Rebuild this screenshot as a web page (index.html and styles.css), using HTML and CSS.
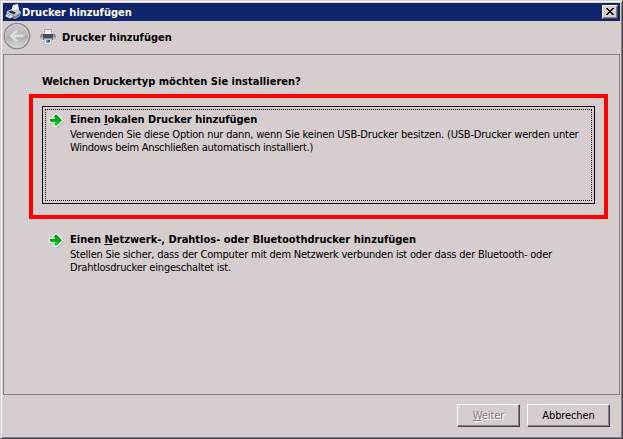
FILE: index.html
```
<!DOCTYPE html>
<html lang="de">
<head>
<meta charset="utf-8">
<title>Drucker hinzufügen</title>
<link rel="stylesheet" href="styles.css">
</head>
<body>
<svg width="0" height="0" class="defs" aria-hidden="true">
  <defs>
    <linearGradient id="green" x1="0" y1="0" x2="0" y2="1"><stop offset="0" stop-color="#078d16"/><stop offset=".5" stop-color="#08a51c"/><stop offset="1" stop-color="#35e34c"/></linearGradient>
    <linearGradient id="orb" x1="0" y1="0" x2="0" y2="1"><stop offset="0" stop-color="#cbcacd"/><stop offset=".48" stop-color="#b9b7ba"/><stop offset=".52" stop-color="#adabae"/><stop offset="1" stop-color="#dcdadc"/></linearGradient>
    <linearGradient id="body" x1="0" y1="0" x2="0" y2="1"><stop offset="0" stop-color="#73777e"/><stop offset=".5" stop-color="#a5a9b0"/><stop offset="1" stop-color="#e2e4e8"/></linearGradient>
    <symbol id="arrow" viewBox="0 0 16 16">
      <path d="M2 6h6L5.500 3.500 8 1.500h1.500L15.500 8l-6 6.500H8L5.500 12 7.500 10H2z" fill="#8d878b" opacity=".5" transform="translate(.5 .7)"/>
      <path d="M1.500 5.300h5L4.900 3.500 7.200 1.200h1.700l6 6.200-6 6.200H7.200L4.900 11.300l1.600-1.800h-5z" fill="url(#green)" stroke="#fff" stroke-width="1.100"/>
    </symbol>
  </defs>
</svg>
<main class="window">
  <header class="titlebar">
    <svg class="app-icon" viewBox="0 0 16 16">
      <path d="M8 1l5-1 1 6-4 2.500-4-1.500z" fill="#f3f5ff"/>
      <path d="M2 7l5-2 2 1 4-1 3 3-1 4-5 3-9-4z" fill="#c3c6cc"/>
      <path d="M1 9l9 3 5-3v2.500l-5 3-9-3z" fill="#7b8088"/>
      <path d="M3 8l3-1.500 5 2L9 10.500z" fill="#30363f"/>
      <path d="M0 12l3-2 5 2-3 2.500z" fill="#e5f0fb"/><path d="M2 12l2-1 2 .7-2 1z" fill="#58a9df"/>
    </svg>
    <span class="title bold">Drucker hinzufügen</span>
    <button class="close" aria-label="Schließen"><svg viewBox="0 0 8 7" shape-rendering="crispEdges"><path d="M0 0h2v1h1v1h2V1h1V0h2v1H7v1H6v1H5v1h1v1h1v1h1v1H6V6H5V5H3v1H2v1H0V6h1V5h1V4h1V3H2V2H1V1H0z"/></svg></button>
  </header>
  <div class="nav">
    <svg class="back" viewBox="0 0 28 28">
      <circle cx="14" cy="14" r="12.700" fill="url(#orb)" stroke="#88868a" stroke-width="1.300"/>
      <circle cx="14" cy="14" r="11.500" fill="none" stroke="#d6d4d7" stroke-width=".7"/>
      <path d="M20.500 14H9.500M14 8.500L8.500 14l5.500 5.500" fill="none" stroke="#dedcdf" stroke-width="2.600"/>
    </svg>
    <svg class="printer" viewBox="0 0 16 16">
      <path d="M4.500.5h7v6h-7z" fill="#e9f0f8" stroke="#a9a9b6"/>
      <path d="M1 5h2v2h10V5h2l1 2v4l-1 1H1l-1-1V7z" fill="url(#body)"/>
      <path d="M3 5h10v4H3z" fill="#484c54"/>
      <path d="M3 9h10v1H3z" fill="#93979e"/>
      <path d="M3 10h10v1H3z" fill="#60646c"/>
      <path d="M4.500 10.500h7v5h-7z" fill="#fff" stroke="#b5bcc8"/>
      <path d="M6 11h2v3H6z" fill="#4d96d8"/><path d="M8 11h2v2H8z" fill="#235989"/><path d="M8 13h2v1H8z" fill="#42b6a0"/>
    </svg>
    <span class="heading bold">Drucker hinzufügen</span>
  </div>
  <section class="panel">
    <h1 class="question bold">Welchen Druckertyp möchten Sie installieren?</h1>
    <div class="highlight">
      <div class="option selected"><div class="focus">
        <svg class="arrow"><use href="#arrow"/></svg>
        <div class="copy">
          <h2 class="bold local">Einen <u>l</u>okalen Drucker hinzufügen</h2>
          <p class="l1">Verwenden Sie diese Option nur dann, wenn Sie keinen USB-Drucker besitzen. (USB-Drucker werden unter</p>
          <p class="l2">Windows beim Anschließen automatisch installiert.)</p>
        </div>
      </div></div>
    </div>
    <div class="option network">
      <svg class="arrow"><use href="#arrow"/></svg>
      <div class="copy">
        <h2 class="bold net">Einen <u>N</u>etzwerk-, Drahtlos- oder Bluetoothdrucker hinzufügen</h2>
        <p class="l3">Stellen Sie sicher, dass der Computer mit dem Netzwerk verbunden ist oder dass der Bluetooth- oder</p>
        <p class="l4">Drahtlosdrucker eingeschaltet ist.</p>
      </div>
    </div>
  </section>
  <footer class="actions">
    <button class="btn next" disabled><span><u>W</u>eiter</span></button>
    <button class="btn cancel"><span>Abbrechen</span></button>
  </footer>
</main>
</body>
</html>
```
FILE: styles.css
```
* { box-sizing: border-box; }
body { margin: 0; background: #d6cece; font: 11px/13px "DejaVu Sans Condensed", "DejaVu Sans", sans-serif; font-stretch: condensed; color: #000; overflow: hidden; }
h1, h2, p { margin: 0; font-size: 11px; white-space: nowrap; }
svg { display: block; flex: none; }
.defs { position: absolute; }
.bold { font-weight: bold; white-space: nowrap; }
u { text-decoration: underline; text-underline-offset: 1px; text-decoration-thickness: 1px; text-decoration-skip-ink: none; }
.window { width: 623px; height: 439px; padding: 2px 1px 1px 2px; border: 1px solid; border-color: #d6cece #46414a #46414a #d6cece; box-shadow: inset 1px 1px #fff, inset -1px -1px #857f86; display: flex; flex-direction: column; }
.titlebar { height: 18px; width: 617px; background: #10246b; color: #fff; display: flex; align-items: center; padding: 0 2px; }
.app-icon { width: 16px; height: 16px; }
.title { margin-left: 1px; }
.close { margin-left: auto; width: 16px; height: 14px; padding: 0 0 1px; background: #d6cece; border: 1px solid; border-color: #fff #46414a #46414a #fff; box-shadow: inset -1px -1px #857f86; display: flex; align-items: center; justify-content: center; }
.close svg { width: 8px; height: 7px; }
.nav { height: 33px; display: flex; align-items: center; padding: 0 0 3px; }
.back { width: 28px; height: 28px; }
.printer { width: 16px; height: 16px; margin: 2px 0 0 9px; }
.heading { margin: 3px 0 0 6px; }
.panel { width: 617px; height: 341px; border: 1px solid #857f86; padding: 20px 11px 0 25px; }
.question { margin-left: 13px; height: 19px; letter-spacing: .02px; }
.highlight { width: 579px; height: 125px; border: 4px solid #f00; padding: 8px 9px; }
.selected { width: 553px; height: 98px; border: 1px solid #000; padding: 2px; }
.focus { height: 92px; border: 1px dotted #000; display: flex; padding: 3px 0 0 2px; }
.arrow { width: 16px; height: 16px; }
.copy { margin-left: 6px; }
.copy h2 { height: 15px; }
.local { letter-spacing: -.03px; }
.l1 { letter-spacing: -.19px; }
.l2 { letter-spacing: -.27px; }
.l3 { letter-spacing: -.22px; }
.l4 { letter-spacing: -.2px; }
.network { display: flex; padding: 14px 0 0 19px; }
.actions { display: flex; justify-content: flex-end; gap: 7px; padding: 9px 11px 0 0; }
.btn { height: 23px; padding: 0 0 1px; font: inherit; color: #000; background: #d6cece; border: 1px solid; border-color: #fff #46414a #46414a #fff; box-shadow: inset -1px -1px #857f86; letter-spacing: -.1px; }
.next { width: 63px; color: #857f86; text-shadow: 1px 1px #fff; }
.cancel { width: 83px; }
```
